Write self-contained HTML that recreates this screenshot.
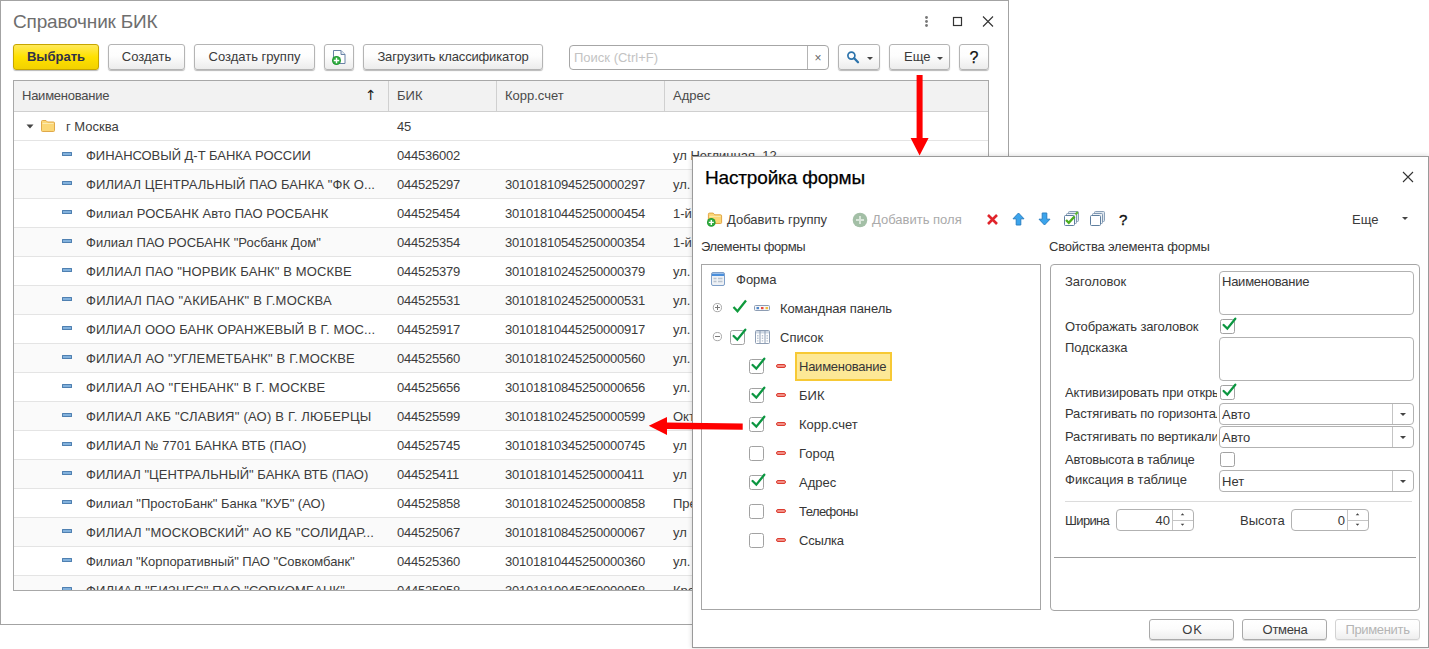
<!DOCTYPE html>
<html lang="ru">
<head>
<meta charset="utf-8">
<title>Справочник БИК</title>
<style>
*{box-sizing:border-box;margin:0;padding:0}
html,body{width:1429px;height:649px;overflow:hidden;background:#fff}
body{position:relative;font-family:"Liberation Sans",Arial,sans-serif;font-size:13px;color:#333;line-height:15px}
.abs{position:absolute}
/* all children of .pg use page coordinates */
/* ---------- main window ---------- */
#win{position:absolute;left:0;top:0;width:1009px;height:625px;border:1px solid #a3a3a3;background:#fff}
#win>.pg{position:absolute;left:-1px;top:-1px;width:0;height:0}
#wtitle{position:absolute;left:13px;top:10px;font-size:19px;line-height:24px;color:#6e6e6e;white-space:nowrap;letter-spacing:-.18px}
.btn{position:absolute;top:44px;height:26px;border:1px solid #b4b4b4;border-radius:3px;background:linear-gradient(#ffffff 0%,#fdfdfd 45%,#ececec 100%);box-shadow:0 1px 1px rgba(0,0,0,.28);font-size:13px;line-height:24px;text-align:center;color:#3a3a3a;white-space:nowrap}
.btn.y{border-color:#c6a500;background:linear-gradient(#ffe95a 0%,#ffe100 50%,#f2d100 100%);font-weight:bold;color:#30304a}
#search{position:absolute;left:569px;top:45px;width:260px;height:25px;border:1px solid #a6a6a6;border-radius:4px;background:#fff}
#search .ph{position:absolute;left:4px;top:4px;color:#c3c3c3;line-height:15px}
#search .x{position:absolute;left:237px;top:0;width:21px;height:23px;border-left:1px solid #b4b4b4;text-align:center;line-height:24px;color:#666;font-size:12px}
/* table */
#tbl{position:absolute;left:13px;top:80px;width:976px;height:511px;border:1px solid #a8a8a8;overflow:hidden;background:#fff}
#tbl>.pg{position:absolute;left:-14px;top:-81px;width:0;height:0}
#thead{position:absolute;left:14px;top:81px;width:974px;height:31px;background:#f2f2f2;border-bottom:1px solid #cfcfcf}
.h{position:absolute;top:88px;line-height:15px;color:#4a4a4a;white-space:nowrap}
.vs{position:absolute;top:81px;width:1px;height:30px;background:#d0d0d0}
.r{position:absolute;left:0;width:988px;height:29px;border-bottom:1px solid #e4e4e4;white-space:nowrap}
.r.g{background:#fafafa}
.r span{position:absolute;top:7px;line-height:15px;color:#3c3c3c}
.r .n{left:86px}
.r .b{left:397px;letter-spacing:-.23px}
.r .k{left:505px;letter-spacing:-.23px}
.r .a{left:673px}
.r .d{position:absolute;left:62px;top:11px;width:10px;height:4px;border-radius:.5px;background:#82b1dc;border:1px solid #4f80b1}
/* ---------- dialog ---------- */
#dlg{position:absolute;left:692px;top:156px;width:737px;height:492px;border:1px solid #9a9a9a;background:#fff;box-shadow:0 0 5px rgba(0,0,0,.18)}
#dlg>.pg{position:absolute;left:-693px;top:-157px;width:0;height:0}
#dtitle{position:absolute;left:705px;top:166px;font-size:19px;line-height:24px;color:#000;white-space:nowrap;letter-spacing:-.16px;-webkit-text-stroke:.25px #000}
.t{position:absolute;white-space:nowrap;line-height:15px;color:#363636}
.box{position:absolute;border:1px solid #a6a6a6;background:#fff}
.cb{position:absolute;width:15px;height:15px;border:1px solid #a2a2a2;border-radius:2.5px;background:#fff}
.ck{position:absolute;overflow:visible}
.rd{position:absolute;width:10px;height:4px;border-radius:2px;background:#f29087;border:1px solid #dc3c30}
.inp{position:absolute;border:1px solid #b2b2b2;border-radius:4px;background:#fff}
.sep{position:absolute;width:1px;background:#c4c4c4}
.caret{position:absolute;width:0;height:0;border-left:3px solid transparent;border-right:3px solid transparent;border-top:3px solid #444}
.dbtn{position:absolute;top:619px;height:21px;border:1px solid #a9a9a9;border-radius:3px;background:linear-gradient(#ffffff 0%,#fcfcfc 45%,#eeeeee 100%);box-shadow:0 1px 0 rgba(0,0,0,.15);text-align:center;line-height:19px;color:#3c3c3c;font-size:13px}
</style>
</head>
<body>

<div id="win"><div class="pg">
  <div id="wtitle">Справочник БИК</div>
  <svg class="abs" style="left:920px;top:14px" width="80" height="16" viewBox="0 0 80 16">
    <circle cx="6.5" cy="3.5" r="1.4" fill="#777"/><circle cx="6.5" cy="7.5" r="1.4" fill="#777"/><circle cx="6.5" cy="11.5" r="1.4" fill="#777"/>
    <rect x="33.5" y="3.5" width="8" height="8" fill="none" stroke="#333" stroke-width="1.2"/>
    <path d="M63 2.5 L73 12.5 M73 2.5 L63 12.5" stroke="#333" stroke-width="1.1" fill="none"/>
  </svg>

  <div class="btn y" style="left:13px;width:86px">Выбрать</div>
  <div class="btn" style="left:108px;width:77px">Создать</div>
  <div class="btn" style="left:194px;width:121px">Создать группу</div>
  <div class="btn" style="left:324px;width:30px">
    <svg class="abs" style="left:6px;top:4px" width="18" height="18" viewBox="0 0 18 18">
      <path d="M2.5 1.5 H10 L14 5.5 V14.5 H2.5 Z" fill="#fff" stroke="#6983a6" stroke-width="1"/>
      <path d="M10 1.5 V5.5 H14" fill="#dfe7f1" stroke="#6983a6" stroke-width="1"/>
      <circle cx="5.5" cy="11.5" r="4.5" fill="#1f9a30"/>
      <circle cx="5.5" cy="11.5" r="3.4" fill="#33ad42"/>
      <path d="M5.5 8.8 V14.2 M2.8 11.5 H8.2" stroke="#fff" stroke-width="1.4"/>
    </svg>
  </div>
  <div class="btn" style="left:363px;width:180px;letter-spacing:-.17px">Загрузить классификатор</div>

  <div id="search"><span class="ph">Поиск (Ctrl+F)</span><span class="x">×</span></div>

  <div class="btn" style="left:838px;width:42px">
    <svg class="abs" style="left:8px;top:5px" width="16" height="16" viewBox="0 0 16 16">
      <circle cx="4.4" cy="5.6" r="3.5" fill="none" stroke="#2c73ab" stroke-width="1.7"/>
      <path d="M7.2 8.3 L11 12.2" stroke="#2c73ab" stroke-width="2.3" stroke-linecap="round"/>
    </svg>
    <span class="caret" style="left:28px;top:12px"></span>
  </div>
  <div class="btn" style="left:889px;width:61px;text-align:left;padding-left:14px">Еще<span class="caret" style="left:47px;top:12px"></span></div>
  <div class="btn" style="left:959px;width:30px;font-size:16px;line-height:25px;color:#111;-webkit-text-stroke:.25px #111">?</div>

  <div id="tbl"><div class="pg">
    <div id="thead"></div>
    <span class="h" style="left:22px;letter-spacing:-.25px">Наименование</span><span class="h" style="left:365px;top:88px;color:#222;font-family:'DejaVu Sans',sans-serif;font-size:14px">↑</span>
    <i class="vs" style="left:388px"></i><span class="h" style="left:397px">БИК</span>
    <i class="vs" style="left:496px"></i><span class="h" style="left:505px">Корр.счет</span>
    <i class="vs" style="left:664px"></i><span class="h" style="left:673px">Адрес</span>
<div class="r" style="top:112px"><svg class="abs" style="left:26px;top:12px" width="8" height="5" viewBox="0 0 8 5"><path d="M0.5 0.5 H7.5 L4 4.5 Z" fill="#444"/></svg>
<svg class="abs" style="left:40px;top:6px" width="16" height="15" viewBox="0 0 16 15"><path d="M1.5 3.5 Q1.5 2.5 2.5 2.5 H6 L7.5 4 H13.5 Q14.5 4 14.5 5 V12.5 Q14.5 13.5 13.5 13.5 H2.5 Q1.5 13.5 1.5 12.5 Z" fill="#fbd777" stroke="#e0a94a" stroke-width="1"/><path d="M2.5 5.5 H13.5" stroke="#fdeab0" stroke-width="1"/></svg>
<span style="left:66px">г Москва</span><span class="b">45</span></div>
<div class="r" style="top:141px"><b class="d"></b><span class="n" style="letter-spacing:-0.04px">ФИНАНСОВЫЙ Д-Т БАНКА РОССИИ</span><span class="b">044536002</span><span class="k"></span><span class="a">ул Неглинная, 12</span></div>
<div class="r g" style="top:170px"><b class="d"></b><span class="n" style="letter-spacing:0.09px">ФИЛИАЛ ЦЕНТРАЛЬНЫЙ ПАО БАНКА &quot;ФК О...</span><span class="b">044525297</span><span class="k">30101810945250000297</span><span class="a">ул. Летниковская, д. 2, стр. 4</span></div>
<div class="r" style="top:199px"><b class="d"></b><span class="n" style="letter-spacing:0.045px">Филиал РОСБАНК Авто ПАО РОСБАНК</span><span class="b">044525454</span><span class="k">30101810445250000454</span><span class="a">1-й &nbsp;Волоколамский проезд, д. 10</span></div>
<div class="r g" style="top:228px"><b class="d"></b><span class="n" style="letter-spacing:0.02px">Филиал ПАО РОСБАНК &quot;Росбанк Дом&quot;</span><span class="b">044525354</span><span class="k">30101810545250000354</span><span class="a">1-й &nbsp;Волоколамский проезд, д. 10</span></div>
<div class="r" style="top:257px"><b class="d"></b><span class="n" style="letter-spacing:0.14px">ФИЛИАЛ ПАО &quot;НОРВИК БАНК&quot; В МОСКВЕ</span><span class="b">044525379</span><span class="k">30101810245250000379</span><span class="a">ул. Зацепский Вал, д. 5</span></div>
<div class="r g" style="top:286px"><b class="d"></b><span class="n" style="letter-spacing:0.25px">ФИЛИАЛ ПАО &quot;АКИБАНК&quot; В Г.МОСКВА</span><span class="b">044525531</span><span class="k">30101810245250000531</span><span class="a">ул. Большая Полянка, д. 2</span></div>
<div class="r" style="top:315px"><b class="d"></b><span class="n" style="letter-spacing:0.1px">ФИЛИАЛ ООО БАНК ОРАНЖЕВЫЙ В Г. МОС...</span><span class="b">044525917</span><span class="k">30101810445250000917</span><span class="a">ул. Щепкина, д. 40</span></div>
<div class="r g" style="top:344px"><b class="d"></b><span class="n" style="letter-spacing:0.18px">ФИЛИАЛ АО &quot;УГЛЕМЕТБАНК&quot; В Г.МОСКВЕ</span><span class="b">044525560</span><span class="k">30101810245250000560</span><span class="a">ул. Островная, д. 4</span></div>
<div class="r" style="top:373px"><b class="d"></b><span class="n" style="letter-spacing:0.23px">ФИЛИАЛ АО &quot;ГЕНБАНК&quot; В Г. МОСКВЕ</span><span class="b">044525656</span><span class="k">30101810845250000656</span><span class="a">ул. Садовая, д. 3</span></div>
<div class="r g" style="top:402px"><b class="d"></b><span class="n" style="letter-spacing:0.22px">ФИЛИАЛ АКБ &quot;СЛАВИЯ&quot; (АО) В Г. ЛЮБЕРЦЫ</span><span class="b">044525599</span><span class="k">30101810245250000599</span><span class="a">Октябрьский проспект, д. 112</span></div>
<div class="r" style="top:431px"><b class="d"></b><span class="n" style="letter-spacing:0.05px">ФИЛИАЛ № 7701 БАНКА ВТБ (ПАО)</span><span class="b">044525745</span><span class="k">30101810345250000745</span><span class="a">ул &nbsp;Кузнецкий Мост, 17</span></div>
<div class="r g" style="top:460px"><b class="d"></b><span class="n" style="letter-spacing:0.03px">ФИЛИАЛ &quot;ЦЕНТРАЛЬНЫЙ&quot; БАНКА ВТБ (ПАО)</span><span class="b">044525411</span><span class="k">30101810145250000411</span><span class="a">ул &nbsp;Воронцовская, 43</span></div>
<div class="r" style="top:489px"><b class="d"></b><span class="n" style="letter-spacing:-0.015px">Филиал &quot;ПростоБанк&quot; Банка &quot;КУБ&quot; (АО)</span><span class="b">044525858</span><span class="k">30101810245250000858</span><span class="a">Пресненская набережная, д. 8</span></div>
<div class="r g" style="top:518px"><b class="d"></b><span class="n" style="letter-spacing:0.2px">ФИЛИАЛ &quot;МОСКОВСКИЙ&quot; АО КБ &quot;СОЛИДАР...</span><span class="b">044525067</span><span class="k">30101810845250000067</span><span class="a">ул &nbsp;Щипок, 4</span></div>
<div class="r" style="top:547px"><b class="d"></b><span class="n" style="letter-spacing:-0.06px">Филиал &quot;Корпоративный&quot; ПАО &quot;Совкомбанк&quot;</span><span class="b">044525360</span><span class="k">30101810445250000360</span><span class="a">ул. Вавилова, д. 24</span></div>
<div class="r g" style="top:576px"><b class="d"></b><span class="n" style="letter-spacing:0.125px">ФИЛИАЛ &quot;БИЗНЕС&quot; ПАО &quot;СОВКОМБАНК&quot;</span><span class="b">044525058</span><span class="k">30101810045250000058</span><span class="a">Краснопресненская набережная, д. 14</span></div>
  </div></div>
</div></div>

<div id="dlg"><div class="pg">
  <div id="dtitle">Настройка формы</div>
  <svg class="abs" style="left:1402px;top:171px" width="12" height="12" viewBox="0 0 12 12"><path d="M1 1 L11 11 M11 1 L1 11" stroke="#333" stroke-width="1.1" fill="none"/></svg>

  <!-- toolbar -->
  <svg class="abs" style="left:706px;top:211px" width="18" height="17" viewBox="0 0 18 17">
    <path d="M2.4 3.2 Q2.4 2.1 3.4 2.1 H7.2 L8.8 3.8 H14.6 Q15.6 3.8 15.6 4.8 V11.5 Q15.6 12.5 14.6 12.5 H3.4 Q2.4 12.5 2.4 11.5 Z" fill="#fbd675" stroke="#e2a546" stroke-width="1"/>
    <path d="M3.4 5.4 H14.6" stroke="#fde9ad" stroke-width="1"/>
    <circle cx="5.3" cy="11.4" r="4.3" fill="#1f9a30"/><circle cx="5.3" cy="11.4" r="3.3" fill="#33ad42"/>
    <path d="M5.3 8.9 V13.9 M2.8 11.4 H7.8" stroke="#fff" stroke-width="1.4"/>
  </svg>
  <span class="t" style="left:727px;top:212px;color:#3a3a3a">Добавить группу</span>
  <svg class="abs" style="left:852px;top:212px" width="16" height="16" viewBox="0 0 16 16">
    <circle cx="8" cy="8" r="7.3" fill="#a3bfa6"/>
    <path d="M8 4 V12 M4 8 H12" stroke="#d9e6da" stroke-width="2"/>
  </svg>
  <span class="t" style="left:872px;top:212px;color:#aaa">Добавить поля</span>

  <svg class="abs" style="left:986px;top:213px" width="13" height="13" viewBox="0 0 13 13"><path d="M2 2 L11 11 M11 2 L2 11" stroke="#e0242b" stroke-width="2.6" stroke-linecap="butt" fill="none"/></svg>
  <svg class="abs" style="left:1012px;top:212px" width="13" height="14" viewBox="0 0 13 14"><path d="M6.5 1 L12 6.8 H8.8 V13 H4.2 V6.8 H1 Z" fill="#3ba4ec" stroke="#2b80c4" stroke-width="1" stroke-linejoin="round"/></svg>
  <svg class="abs" style="left:1038px;top:212px" width="13" height="14" viewBox="0 0 13 14"><path d="M6.5 13 L12 7.2 H8.8 V1 H4.2 V7.2 H1 Z" fill="#3ba4ec" stroke="#2b80c4" stroke-width="1" stroke-linejoin="round"/></svg>
  <svg class="abs" style="left:1063px;top:210px" width="17" height="17" viewBox="0 0 17 17">
    <rect x="5.5" y="1.5" width="10" height="10" rx="1" fill="#dfe7ee" stroke="#8aa0b8"/>
    <rect x="3.5" y="3.5" width="10" height="10" rx="1" fill="#eef2f6" stroke="#7f97b2"/>
    <rect x="1.5" y="5.5" width="10" height="10" rx="1" fill="#fff" stroke="#5f7f9f"/>
    <path d="M12.5 4.5 L14.8 2" stroke="#5cb531" stroke-width="2"/>
    <path d="M3 10 L5.8 12.8 L11.5 6.5" fill="none" stroke="#4cae1e" stroke-width="2.4"/>
  </svg>
  <svg class="abs" style="left:1089px;top:210px" width="17" height="17" viewBox="0 0 17 17">
    <rect x="5.5" y="1.5" width="10" height="10" rx="1" fill="#dfe7ee" stroke="#8aa0b8"/>
    <rect x="3.5" y="3.5" width="10" height="10" rx="1" fill="#eef2f6" stroke="#7f97b2"/>
    <rect x="1.5" y="5.5" width="10" height="10" rx="1" fill="#fff" stroke="#5f7f9f"/>
  </svg>
  <span class="t" style="left:1119px;top:211px;font-size:15px;line-height:17px;color:#111;-webkit-text-stroke:.4px #111">?</span>
  <span class="t" style="left:1352px;top:212px;color:#3a3a3a">Еще</span>
  <span class="caret" style="left:1402px;top:217px"></span>

  <span class="t" style="left:701px;top:239px;letter-spacing:-0.37px">Элементы формы</span>
  <span class="t" style="left:1049px;top:239px;letter-spacing:-0.2px">Свойства элемента формы</span>

  <!-- tree -->
  <div class="box" style="left:701px;top:264px;width:340px;height:346px"></div>
  <svg class="abs" style="left:710px;top:271px" width="16" height="16" viewBox="0 0 16 16">
    <rect x="1.5" y="1.5" width="13" height="13" rx="1.5" fill="#eef1f5" stroke="#7f9fc8"/>
    <path d="M2 2.5 H14 V5 H2 Z" fill="#4a8fdc"/>
    <path d="M3.5 7.5 H6.5 M8 7.5 H12.5 M3.5 10.5 H6.5 M8 10.5 H12.5" stroke="#b9c3cf" stroke-width="1.6"/>
  </svg>
  <span class="t" style="left:736px;top:272px">Форма</span>

  <svg class="abs" style="left:712px;top:302px" width="11" height="11" viewBox="0 0 11 11"><circle cx="5.4" cy="5.6" r="4.1" fill="#fff" stroke="#a8a8a8"/><path d="M3 5.5 H8 M5.5 3 V8" stroke="#7a7a7a" stroke-width="1"/></svg>
  <svg class="ck" style="left:732px;top:299px" width="16" height="15" viewBox="0 0 16 15"><path d="M1.5 8 L5.5 12.2 L14 1.5" fill="none" stroke="#0f9a3c" stroke-width="2.3"/></svg>
  <svg class="abs" style="left:754px;top:304px" width="17" height="8" viewBox="0 0 17 8">
    <rect x="0.5" y="1.5" width="15" height="5" rx="1" fill="#f4f6f9" stroke="#8d9db3"/>
    <rect x="2.5" y="3" width="2.5" height="2.2" fill="#4f86c9"/><rect x="7" y="3" width="2.5" height="2.2" fill="#e8483c"/><rect x="11.5" y="3" width="2.5" height="2.2" fill="#f1bf3d"/>
  </svg>
  <span class="t" style="left:780px;top:301px;letter-spacing:-0.1px">Командная панель</span>

  <svg class="abs" style="left:712px;top:331px" width="11" height="11" viewBox="0 0 11 11"><circle cx="5.4" cy="5.6" r="4.1" fill="#fff" stroke="#a8a8a8"/><path d="M3 5.5 H8" stroke="#7a7a7a" stroke-width="1"/></svg>
  <div class="cb" style="left:730px;top:330px"></div>
  <svg class="ck" style="left:732px;top:328px" width="15" height="14" viewBox="0 0 15 14"><path d="M1.6 8 L5.3 11.6 L13.3 1.7" fill="none" stroke="#0b9640" stroke-width="2.3" stroke-linecap="round" stroke-linejoin="miter"/></svg>
  <svg class="abs" style="left:755px;top:330px" width="15" height="14" viewBox="0 0 15 14">
    <rect x="0.5" y="0.5" width="14" height="13" rx="1" fill="#fff" stroke="#8d9db3"/>
    <path d="M1 1 H14 V3.5 H1 Z" fill="#cfd8e3"/>
    <path d="M5 1 V13 M10 1 V13" stroke="#8d9db3"/>
    <path d="M2.8 5 V12 M7.5 5 V12 M12.2 5 V12" stroke="#b7c2d0" stroke-width="1.4" stroke-dasharray="1.4 1.2"/>
  </svg>
  <span class="t" style="left:780px;top:330px">Список</span>

  <div class="abs" style="left:795px;top:352px;width:97px;height:29px;background:#fde896;border:2px solid #f7c935"></div>
  <div class="cb" style="left:749px;top:359px"></div><svg class="ck" style="left:751px;top:357px" width="15" height="14" viewBox="0 0 15 14"><path d="M1.6 8 L5.3 11.6 L13.3 1.7" fill="none" stroke="#0b9640" stroke-width="2.3" stroke-linecap="round" stroke-linejoin="miter"/></svg>
  <b class="rd" style="left:776px;top:364px"></b><span class="t" style="left:799px;top:359px;letter-spacing:-0.25px">Наименование</span>

  <div class="cb" style="left:749px;top:388px"></div><svg class="ck" style="left:751px;top:386px" width="15" height="14" viewBox="0 0 15 14"><path d="M1.6 8 L5.3 11.6 L13.3 1.7" fill="none" stroke="#0b9640" stroke-width="2.3" stroke-linecap="round" stroke-linejoin="miter"/></svg>
  <b class="rd" style="left:776px;top:393px"></b><span class="t" style="left:799px;top:388px">БИК</span>

  <div class="cb" style="left:749px;top:417px"></div><svg class="ck" style="left:751px;top:415px" width="15" height="14" viewBox="0 0 15 14"><path d="M1.6 8 L5.3 11.6 L13.3 1.7" fill="none" stroke="#0b9640" stroke-width="2.3" stroke-linecap="round" stroke-linejoin="miter"/></svg>
  <b class="rd" style="left:776px;top:422px"></b><span class="t" style="left:799px;top:417px">Корр.счет</span>

  <div class="cb" style="left:749px;top:446px"></div>
  <b class="rd" style="left:776px;top:451px"></b><span class="t" style="left:799px;top:446px">Город</span>

  <div class="cb" style="left:749px;top:475px"></div><svg class="ck" style="left:751px;top:473px" width="15" height="14" viewBox="0 0 15 14"><path d="M1.6 8 L5.3 11.6 L13.3 1.7" fill="none" stroke="#0b9640" stroke-width="2.3" stroke-linecap="round" stroke-linejoin="miter"/></svg>
  <b class="rd" style="left:776px;top:480px"></b><span class="t" style="left:799px;top:475px">Адрес</span>

  <div class="cb" style="left:749px;top:504px"></div>
  <b class="rd" style="left:776px;top:509px"></b><span class="t" style="left:799px;top:504px;letter-spacing:-.55px">Телефоны</span>

  <div class="cb" style="left:749px;top:533px"></div>
  <b class="rd" style="left:776px;top:538px"></b><span class="t" style="left:799px;top:533px;letter-spacing:-.2px">Ссылка</span>

  <!-- properties -->
  <div class="box" style="left:1050px;top:264px;width:370px;height:347px;border-radius:4px"></div>
  <span class="t" style="left:1065px;top:274px">Заголовок</span>
  <div class="inp" style="left:1219px;top:271px;width:195px;height:44px"></div>
  <span class="t" style="left:1222px;top:274px;letter-spacing:-0.25px">Наименование</span>

  <span class="t" style="left:1065px;top:319px;letter-spacing:-0.15px">Отображать заголовок</span>
  <div class="cb" style="left:1220px;top:319px"></div><svg class="ck" style="left:1222px;top:317px" width="15" height="14" viewBox="0 0 15 14"><path d="M1.6 8 L5.3 11.6 L13.3 1.7" fill="none" stroke="#0b9640" stroke-width="2.3" stroke-linecap="round" stroke-linejoin="miter"/></svg>

  <span class="t" style="left:1065px;top:340px">Подсказка</span>
  <div class="inp" style="left:1219px;top:337px;width:195px;height:44px"></div>

  <div class="abs" style="left:1065px;top:385px;width:152px;height:15px;overflow:hidden"><span class="t" style="left:0;top:0;letter-spacing:-.15px">Активизировать при открытии</span></div>
  <div class="cb" style="left:1220px;top:385px"></div><svg class="ck" style="left:1222px;top:383px" width="15" height="14" viewBox="0 0 15 14"><path d="M1.6 8 L5.3 11.6 L13.3 1.7" fill="none" stroke="#0b9640" stroke-width="2.3" stroke-linecap="round" stroke-linejoin="miter"/></svg>

  <div class="abs" style="left:1065px;top:406px;width:152px;height:15px;overflow:hidden"><span class="t" style="left:0;top:0;letter-spacing:-.15px">Растягивать по горизонтали</span></div>
  <div class="inp" style="left:1219px;top:403px;width:195px;height:22px"></div><i class="sep" style="left:1392px;top:404px;height:20px"></i>
  <span class="t" style="left:1222px;top:407px">Авто</span><span class="caret" style="left:1400px;top:413px"></span>

  <div class="abs" style="left:1065px;top:429px;width:152px;height:15px;overflow:hidden"><span class="t" style="left:0;top:0;letter-spacing:-.15px">Растягивать по вертикали</span></div>
  <div class="inp" style="left:1219px;top:426px;width:195px;height:22px"></div><i class="sep" style="left:1392px;top:427px;height:20px"></i>
  <span class="t" style="left:1222px;top:430px">Авто</span><span class="caret" style="left:1400px;top:436px"></span>

  <span class="t" style="left:1065px;top:452px;letter-spacing:-0.26px">Автовысота в таблице</span>
  <div class="cb" style="left:1220px;top:452px"></div>

  <span class="t" style="left:1065px;top:472px">Фиксация в таблице</span>
  <div class="inp" style="left:1219px;top:470px;width:195px;height:22px"></div><i class="sep" style="left:1392px;top:471px;height:20px"></i>
  <span class="t" style="left:1222px;top:474px">Нет</span><span class="caret" style="left:1400px;top:480px"></span>

  <div class="abs" style="left:1065px;top:501px;width:347px;height:1px;background:#dcdcdc"></div>

  <span class="t" style="left:1065px;top:513px;letter-spacing:-0.65px">Ширина</span>
  <div class="inp" style="left:1116px;top:509px;width:78px;height:22px"></div><i class="sep" style="left:1172px;top:510px;height:20px"></i><i class="sep" style="left:1173px;top:520px;width:20px;height:1px"></i>
  <span class="t" style="left:1130px;top:513px;width:40px;text-align:right">40</span>
  <svg class="abs" style="left:1179px;top:513px" width="7" height="14" viewBox="0 0 7 14"><path d="M1.7 2.3 L3.5 0.3 L5.3 2.3 Z M1.7 10.8 L3.5 12.8 L5.3 10.8 Z" fill="#444"/></svg>

  <span class="t" style="left:1240px;top:513px">Высота</span>
  <div class="inp" style="left:1291px;top:509px;width:78px;height:22px"></div><i class="sep" style="left:1347px;top:510px;height:20px"></i><i class="sep" style="left:1348px;top:520px;width:20px;height:1px"></i>
  <span class="t" style="left:1305px;top:513px;width:40px;text-align:right">0</span>
  <svg class="abs" style="left:1354px;top:513px" width="7" height="14" viewBox="0 0 7 14"><path d="M1.7 2.3 L3.5 0.3 L5.3 2.3 Z M1.7 10.8 L3.5 12.8 L5.3 10.8 Z" fill="#444"/></svg>

  <div class="abs" style="left:1054px;top:557px;width:362px;height:1px;background:#9c9c9c"></div>

  <div class="dbtn" style="left:1149px;width:85px;letter-spacing:.8px;padding-left:2px">OK</div>
  <div class="dbtn" style="left:1242px;width:85px;letter-spacing:-.3px;padding-left:1px">Отмена</div>
  <div class="dbtn" style="left:1335px;width:85px;color:#b4b4b4;letter-spacing:-.33px;border-color:#d2d2d2;box-shadow:0 1px 0 rgba(0,0,0,.06)">Применить</div>

</div></div>

<!-- red arrows -->
<svg class="abs" style="left:0;top:0" width="1429" height="649" viewBox="0 0 1429 649">
  <path d="M916.6 75 H922.6 V138 H928.6 L919.6 155.5 L910.6 138 H916.6 Z" fill="#fe0000"/>
  <path d="M742.7 423.6 L742.7 429.7 L667 428.9 L667 434.9 L648.8 425.7 L667 416.9 L667 422.6 Z" fill="#fe0000"/>
</svg>

</body>
</html>
